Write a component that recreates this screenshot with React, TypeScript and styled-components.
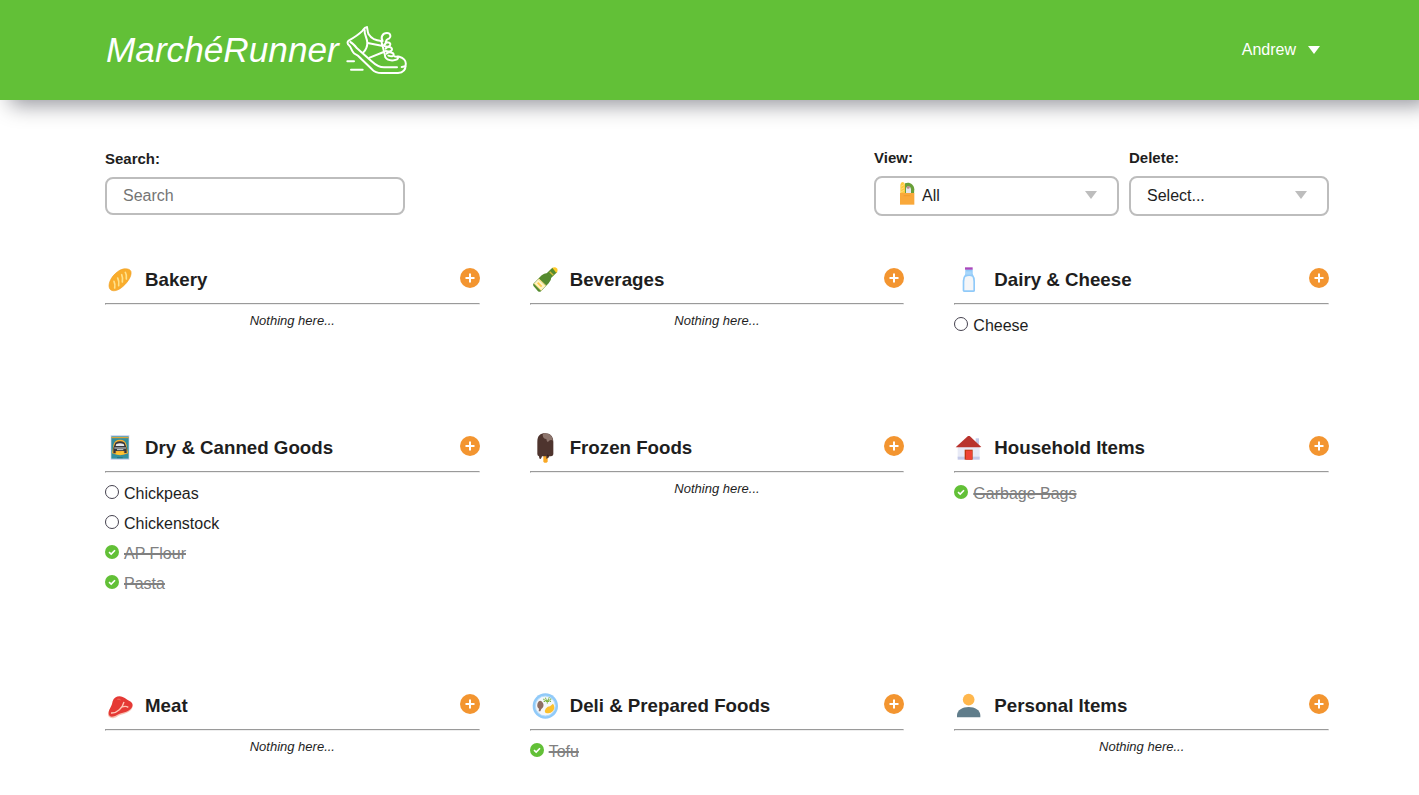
import React from "react";
import styled, { createGlobalStyle } from "styled-components";

const Global = createGlobalStyle`
  * { box-sizing: border-box; }
  body {
    margin: 0;
    background: #fff;
    color: #1e1e1e;
    font: 16px/20px "Liberation Sans", Arial, sans-serif;
    overflow: hidden;
  }
`;

const Header = styled.header`
  height: 100px;
  padding: 0 99px 0 105px;
  display: flex;
  align-items: center;
  justify-content: space-between;
  background: #62c037;
  color: #fff;
  box-shadow: 10px 5px 20px rgba(0, 0, 20, 0.42);
`;

const Brand = styled.div`
  display: flex;
  align-items: center;
  gap: 7px;
  padding-left: 1px;
  font-size: 35.2px;
  font-style: italic;
  line-height: 50px;
`;

const ShoeSvg = styled.svg`
  width: 61px;
  height: 50px;
  fill: none;
  stroke: #fff;
  stroke-width: 6;
  stroke-linecap: round;
  stroke-linejoin: round;
`;

const Account = styled.div`
  display: flex;
  align-items: center;
  gap: 12px;
`;

const Arrow = styled.span<{ $color: string }>`
  width: 0;
  height: 0;
  border: 6px solid transparent;
  border-top: 8px solid ${(p) => p.$color};
  border-bottom: 0;
`;

const Main = styled.main`
  padding: 48px 90px 0 105px;
`;

const Toolbar = styled.div`
  display: flex;
  justify-content: space-between;
  height: 117px;
`;

const Filters = styled.div`
  display: flex;
  gap: 10px;
`;

const Field = styled.div<{ $width: number; $top?: number }>`
  width: ${(p) => p.$width}px;
  padding-top: ${(p) => p.$top ?? 0}px;
`;

const Label = styled.label`
  display: block;
  margin-bottom: 8px;
  font-size: 15px;
  font-weight: bold;
`;

const SearchInput = styled.input`
  display: block;
  width: 100%;
  height: 38px;
  padding: 0 16px;
  border: 2px solid #bdbdbd;
  border-radius: 8px;
  font: inherit;
  background: #fff;
  &::placeholder { color: #757575; opacity: 1; }
`;

const SelectBox = styled.div<{ $left: number }>`
  height: 40px;
  padding: 0 20px 2px ${(p) => p.$left}px;
  display: flex;
  align-items: center;
  border: 2px solid #bdbdbd;
  border-radius: 8px;
`;

const SelectText = styled.span`
  flex: 1;
  padding-top: 2px;
`;

const BagSvg = styled.svg`
  width: 16px;
  height: 24px;
  margin: 0 7px 4px 0;
`;

const Grid = styled.div`
  display: grid;
  grid-template-columns: repeat(3, 1fr);
  column-gap: 50px;
  row-gap: 92px;
`;

const Section = styled.section`
  min-width: 0;
`;

const SectionHead = styled.div`
  height: 38px;
  display: flex;
  align-items: flex-start;
`;

const CategorySvg = styled.svg`
  width: 30px;
  height: 30px;
  margin-right: 10px;
`;

const Title = styled.h3`
  flex: 1;
  margin: 0;
  font-size: 18.72px;
  line-height: 30px;
`;

const AddButton = styled.button`
  width: 20px;
  height: 20px;
  margin-top: 3px;
  padding: 0;
  border: 0;
  background: none;
  svg { display: block; }
`;

const Rule = styled.hr`
  height: 2px;
  margin: 0;
  border: 1px solid;
  border-color: #9a9a9a #eee #eee #9a9a9a;
`;

const Empty = styled.p`
  margin: 6px 0 0;
  text-align: center;
  font-size: 13px;
  font-style: italic;
`;

const List = styled.ul`
  margin: 6px 0 0;
  padding: 0;
  list-style: none;
`;

const Item = styled.li<{ $done: boolean }>`
  height: 30px;
  display: flex;
  align-items: center;
  gap: 5px;
  color: ${(p) => (p.$done ? "#808080" : "#1e1e1e")};
  svg { margin-bottom: 4px; }
  span {
    text-decoration: ${(p) => (p.$done ? "line-through" : "none")};
    text-decoration-thickness: 2px;
  }
`;

const Shoe = () => (
  <ShoeSvg viewBox="34 30 183 150">
    <path d="M97 37C90 36 88 41 84 47C72 59 58 68 42 77C37 80 38 87 43 91C50 97 51 109 58 115C66 118 73 124 80 132L112 163C121 173 128 174 141 174L190 174C207 173 213 162 213 149C215 137 206 128 194 125C189 124 184 126 180 124" />
    <path d="M97 37C99 43 98 52 102 58C110 71 124 77 140 78M90 45C88 56 97 68 98 83C98 96 93 105 86 112M47 81C55 85 60 91 67 100L109 137C122 149 133 157 148 157L187 157M201 156L212 154" />
    <path d="M99 84L141 92M105 128L147 111M140 78C144 97 150 112 152 127C157 135 166 137 177 136C185 135 191 133 190 127" />
    <path d="M144 78C137 68 143 54 157 54C169 54 169 66 164 70C159 73 156 71 153 81M151 87C155 79 167 82 167 88C167 95 158 96 151 94C145 92 149 88 152 87M153 101C158 94 172 95 172 103C172 110 159 111 153 108M156 116C162 109 177 112 177 119C177 125 170 125 161 122" />
    <path d="M38 139L58 139M49 164L84 164" />
  </ShoeSvg>
);

const Bag = () => (
  <BagSvg viewBox="0 0 48 72">
    <path d="M18 7C29 1 45 8 46 25L45 38L18 36Z" fill="#689f38" />
    <path d="M21 36V22Q23 16 28 16Q35 17 36 24V36Z" fill="#e4e7ef" />
    <path d="M23 18Q28 11 33 19L30 23H25Z" fill="#bc8b92" />
    <path d="M4 37V11Q5 3 11 3Q17 3 18 11V37Z" fill="#ffca40" />
    <path d="M6 16L15 11M6 25L15 20M6 33L15 28" stroke="#ffe082" strokeWidth="2.5" />
    <path d="M3 36H46V71H3Z" fill="#f9a83a" />
    <path d="M14 44H34" fill="none" stroke="#ed962a" strokeWidth="2" />
  </BagSvg>
);

const art: Record<string, React.ReactNode> = {
  bread: (
    <>
      <path d="M12 63C12 45 27 26 44 16C59 8 76 11 78 20C81 36 63 58 48 69C32 81 13 81 12 63Z" fill="#f9ad2c" stroke="#f2a125" strokeWidth="2" />
      <path d="M27 49Q31 57 29 69M38 39Q43 48 41 62M50 29Q54 38 52 51M61 22Q66 30 64 42" fill="none" stroke="#ffe18a" strokeWidth="5" strokeLinecap="round" />
    </>
  ),
  bottle: (
    <>
      <path d="M10 56L35 31Q42 25 52 24L64 36Q64 47 56 55L33 79Q29 82 24 79L11 64Q8 60 10 56Z" fill="#558b2f" />
      <path d="M50 25L67 8L82 21L64 38Z" fill="#558b2f" />
      <path d="M67 8Q75 4 82 11Q85 18 79 24L75 19Z" fill="#ffca28" />
      <path d="M59 20L70 31" stroke="#d4bb37" strokeWidth="4" />
      <path d="M25 42L47 63L33 77L12 56Z" fill="#fff3c4" />
      <path d="M26 41L48 62M13 55L34 76" fill="none" stroke="#ffe082" strokeWidth="3" />
      <path d="M23 53L35 65" stroke="#ffcc53" strokeWidth="6" />
    </>
  ),
  milk: (
    <>
      <path d="M34 13H56V27Q64 38 63 49V78Q62 81 58 81H32Q27 81 26 77V47Q27 35 34 28Z" fill="#90caf9" />
      <path d="M34 36Q31 43 31 50V76H58V50Q58 42 55 35Q45 30 34 36Z" fill="#f5f6f8" />
      <path d="M36 19H53V29H36Z" fill="#a9d7fb" />
      <path d="M33 7H56V14H33Z" fill="#ab47bc" />
    </>
  ),
  pack: (
    <>
      <path d="M17 6H73V81H17Z" fill="#d4daf0" />
      <path d="M19 10H71V77H19Z" fill="#338f9e" />
      <path d="M19 14H71" stroke="#f9a825" strokeWidth="3" />
      <path d="M26 34Q29 20 45 20Q61 20 64 34L69 61Q46 72 21 61Z" fill="#f9b02e" />
      <path d="M31 29Q45 21 59 29L65 45V60H58V54H32V61H25V45Z" fill="#37373b" />
      <path d="M34 33Q45 28 56 33L58 39H32Z" fill="#e7eaee" />
      <path d="M28 45H63M36 50H55" fill="none" stroke="#cfd8dc" strokeWidth="3" />
      <path d="M32 63L38 56L45 59L52 54L58 63Q45 68 32 63Z" fill="#ffc630" />
      <path d="M36 74H53" stroke="#226b78" strokeWidth="2.5" />
    </>
  ),
  ice: (
    <>
      <path d="M40 67H53V86Q46 93 40 86Z" fill="#f9a825" />
      <path d="M22 26C22 8 31 1 45 1C61 1 70 10 70 27V64Q69 70 63 70H36L34 75Q31 80 28 76L27 70Q22 69 22 63Z" fill="#4e342e" />
      <path d="M42 1Q67 0 69 23Q62 18 56 25Q51 31 49 18Q39 18 38 7Q38 2 42 1Z" fill="#8d756d" />
      <path d="M51 64V74L57 70" stroke="#4e342e" strokeWidth="4" />
    </>
  ),
  house: (
    <>
      <path d="M65 16H75V38H65Z" fill="#c5cae9" />
      <path d="M11 37L44 12L77 37V76H11Z" fill="#e8eaf6" />
      <path d="M11 71H77V80H11Z" fill="#c5cae9" />
      <path d="M5 43L42 9H47L82 42L77 43Z" fill="#b9332d" />
      <path d="M32 50H56V80H32Z" fill="#bf360c" />
      <path d="M36 53H54V80H36Z" fill="#ef4335" />
    </>
  ),
  meat: (
    <>
      <path d="M23 33C27 20 41 15 53 20C63 24 67 30 75 34C85 40 85 50 77 58C65 70 48 69 36 77C23 85 9 82 9 70C9 56 23 48 23 33Z" fill="#f7c3b5" />
      <path d="M23 31C27 18 41 13 53 18C63 22 67 27 75 31C85 37 85 46 77 54C65 66 48 64 36 72C23 80 11 79 11 67C11 54 21 47 23 31Z" fill="#e53935" />
      <path d="M18 66Q31 67 43 56Q54 46 57 33M52 48Q62 44 70 49" fill="none" stroke="#ffc7b6" strokeWidth="4" />
      <path d="M37 25Q43 23 47 27" fill="none" stroke="#f06d58" strokeWidth="3" />
    </>
  ),
  plate: (
    <>
      <circle cx="46" cy="45" r="38" fill="#90caf9" />
      <circle cx="46" cy="45" r="30" fill="#f3f7fb" stroke="#b6ddfa" strokeWidth="3" />
      <path d="M23 36Q30 23 39 36Q44 47 34 54L31 61H26L27 53Q19 49 23 36Z" fill="#8d6e63" />
      <path d="M69 38Q77 48 69 60Q59 71 46 65Q42 61 47 53Q53 46 60 46Z" fill="#fbc02d" />
      <path d="M40 24L52 31L64 23M46 20L52 31L58 19M41 31H65M52 31V38" fill="none" stroke="#7cb342" strokeWidth="3.5" strokeDasharray="4 2" />
    </>
  ),
  person: (
    <>
      <circle cx="44" cy="26" r="17.5" fill="#ffb74d" />
      <path d="M9 79V72C10 57 25 48 44 48S78 57 79 72V79Z" fill="#607d8b" />
    </>
  ),
};

type Entry = { name: string; done?: boolean };
type Category = { title: string; icon: string; items: Entry[] };

const categories: Category[] = [
  { title: "Bakery", icon: "bread", items: [] },
  { title: "Beverages", icon: "bottle", items: [] },
  { title: "Dairy & Cheese", icon: "milk", items: [{ name: "Cheese" }] },
  {
    title: "Dry & Canned Goods",
    icon: "pack",
    items: [
      { name: "Chickpeas" },
      { name: "Chickenstock" },
      { name: "AP Flour", done: true },
      { name: "Pasta", done: true },
    ],
  },
  { title: "Frozen Foods", icon: "ice", items: [] },
  { title: "Household Items", icon: "house", items: [{ name: "Garbage Bags", done: true }] },
  { title: "Meat", icon: "meat", items: [] },
  { title: "Deli & Prepared Foods", icon: "plate", items: [{ name: "Tofu", done: true }] },
  { title: "Personal Items", icon: "person", items: [] },
];

const Check = ({ done }: { done?: boolean }) => (
  <svg width="14" height="14" viewBox="0 0 14 14" fill="none">
    {done ? (
      <>
        <circle cx="7" cy="7" r="7" fill="#62c037" />
        <path d="M4 7.2L6.2 9.1L10 5.2" stroke="#fff" strokeWidth="1.6" />
      </>
    ) : (
      <circle cx="7" cy="7" r="6.5" stroke="#45424f" strokeWidth="1" />
    )}
  </svg>
);

export default function App() {
  return (
    <>
      <Global />
      <Header>
        <Brand>
          MarchéRunner
          <Shoe />
        </Brand>
        <Account>
          Andrew
          <Arrow $color="#fff" />
        </Account>
      </Header>
      <Main>
        <Toolbar>
          <Field $width={300} $top={1}>
            <Label htmlFor="search">Search:</Label>
            <SearchInput id="search" placeholder="Search" />
          </Field>
          <Filters>
            <Field $width={245}>
              <Label>View:</Label>
              <SelectBox $left={23}>
                <Bag />
                <SelectText>All</SelectText>
                <Arrow $color="#bdbdbd" />
              </SelectBox>
            </Field>
            <Field $width={200}>
              <Label>Delete:</Label>
              <SelectBox $left={16}>
                <SelectText>Select...</SelectText>
                <Arrow $color="#bdbdbd" />
              </SelectBox>
            </Field>
          </Filters>
        </Toolbar>
        <Grid>
          {categories.map((c) => (
            <Section key={c.title}>
              <SectionHead>
                <CategorySvg viewBox="0 0 90 90">{art[c.icon]}</CategorySvg>
                <Title>{c.title}</Title>
                <AddButton aria-label={`Add to ${c.title}`}>
                  <svg width="20" height="20" viewBox="0 0 20 20">
                    <circle cx="10" cy="10" r="10" fill="#f39530" />
                    <path d="M10 5.5V14.5M5.5 10H14.5" stroke="#fff" strokeWidth="2" />
                  </svg>
                </AddButton>
              </SectionHead>
              <Rule />
              {c.items.length === 0 ? (
                <Empty>Nothing here...</Empty>
              ) : (
                <List>
                  {c.items.map((i) => (
                    <Item key={i.name} $done={!!i.done}>
                      <Check done={i.done} />
                      <span>{i.name}</span>
                    </Item>
                  ))}
                </List>
              )}
            </Section>
          ))}
        </Grid>
      </Main>
    </>
  );
}
